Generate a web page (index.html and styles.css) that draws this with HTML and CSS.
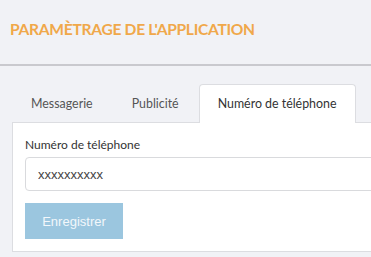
FILE: index.html
```html
<!DOCTYPE html>
<html lang="fr">
  <head>
    <meta charset="utf-8" />
    <title>Paramètrage de l'application</title>
    <link rel="stylesheet" href="styles.css">
  </head>
  <body>
    <div class="page-header">
      <h1>PARAMÈTRAGE DE L'APPLICATION</h1>
    </div>

    <div class="content">
      <ul class="tabs">
        <li class="tab">Messagerie</li>
        <li class="tab">Publicité</li>
        <li class="tab active">Numéro de téléphone</li>
      </ul>

      <div class="panel">
        <label class="field-label" for="phone">Numéro de téléphone</label>
        <input class="field-input" id="phone" type="text" value="xxxxxxxxxx">
        <button class="btn-save" disabled>Enregistrer</button>
      </div>
    </div>
  </body>
</html>
```

FILE: styles.css
```css
body {
  margin: 0;
  background-color: #f1f2f6;
  font-family: Lato, "Open Sans", sans-serif;
  overflow: hidden;
  width: 371px;
  height: 257px;
}
.page-header {
  height: 66px;
  border-bottom: 2px solid #c9c9ce;
  box-sizing: border-box;
  padding: 19px 0 0 10px;
}
.page-header h1 {
  margin: 0;
  font-size: 15.6px;
  line-height: 20px;
  font-weight: bold;
  color: #f0a84a;
  letter-spacing: -0.3px;
}
.content {
  padding: 18px 0 0 12px;
  width: 400px;
}
.tabs {
  display: flex;
  list-style: none;
  margin: 0;
  padding: 0;
  border-bottom: 1px solid #dcdde1;
}
.tab {
  padding: 0 18px;
  height: 37px;
  line-height: 37px;
  font-size: 12.4px;
  color: #555;
  border: 1px solid transparent;
  border-bottom: none;
  margin-right: 1px;
  margin-bottom: -1px;
}
.tab.active {
  background-color: #fff;
  color: #333;
  border-color: #dcdde1;
  border-radius: 4px 4px 0 0;
  height: 38px;
}
.panel {
  background-color: #fff;
  border: 1px solid #dcdde1;
  border-top: none;
  padding: 14px 12px 12px;
  display: flex;
  flex-direction: column;
  align-items: flex-start;
}
.field-label {
  font-size: 12px;
  line-height: 16px;
  color: #333;
  margin-bottom: 4px;
}
.field-input {
  box-sizing: border-box;
  width: 100%;
  height: 34px;
  border: 1px solid #d9dadd;
  border-radius: 4px;
  padding: 0 12px;
  font-family: "Liberation Sans", Arial, sans-serif;
  font-size: 13px;
  color: #444;
}
.btn-save {
  margin-top: 12px;
  width: 98px;
  height: 36px;
  border: none;
  border-radius: 0;
  background-color: #9bc6df;
  color: #f2f7fb;
  font-family: "Liberation Sans", Arial, sans-serif;
  font-size: 13px;
}
```
